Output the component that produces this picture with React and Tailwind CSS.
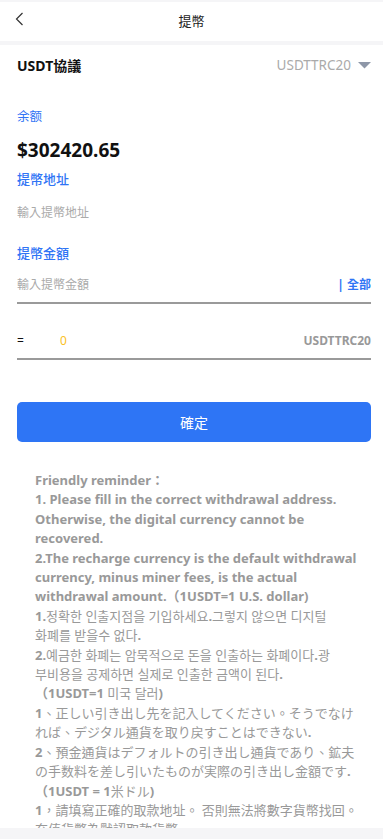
import React from 'react';

const font = { fontFamily: '"Noto Sans", "Noto Sans CJK TC", "Noto Sans CJK JP", "Noto Sans CJK KR", sans-serif' };

const reminder = [
  'Friendly reminder：',
  '1. Please fill in the correct withdrawal address.',
  'Otherwise, the digital currency cannot be',
  'recovered.',
  '2.The recharge currency is the default withdrawal',
  'currency, minus miner fees, is the actual',
  'withdrawal amount.（1USDT=1 U.S. dollar)',
  '1.정확한 인출지점을 기입하세요.그렇지 않으면 디지털',
  '화폐를 받을수 없다.',
  '2.예금한 화폐는 암묵적으로 돈을 인출하는 화폐이다.광',
  '부비용을 공제하면 실제로 인출한 금액이 된다.',
  '（1USDT=1 미국 달러)',
  '1、正しい引き出し先を記入してください。そうでなけ',
  'れば、デジタル通貨を取り戻すことはできない.',
  '2、預金通貨はデフォルトの引き出し通貨であり、鉱夫',
  'の手数料を差し引いたものが実際の引き出し金額です.',
  '（1USDT = 1米ドル)',
  '1，請填寫正確的取款地址。 否則無法將數字貨幣找回。',
  '充值貨幣為默認取款貨幣',
];

// latin parts are bold, CJK parts render regular like the reference
function Line({ text }) {
  const parts = text.split(/([\x00-\x7F：（]+)/).filter(Boolean);
  return (
    <div className="whitespace-nowrap">
      {parts.map((p, i) => (
        <span key={i} className={/^[\x00-\x7F：（]+$/.test(p) ? 'font-bold' : 'font-normal'}>{p}</span>
      ))}
    </div>
  );
}

export default function App() {
  return (
    <div className="relative h-[839px] w-[383px] overflow-hidden bg-[#f5f5f7] pt-[2px]" style={font}>
      {/* header */}
      <div className="relative flex h-[39px] items-center justify-center bg-white">
        <svg className="absolute left-[15px] top-[10px]" width="9" height="14" viewBox="0 0 9 14" fill="none">
          <path d="M7.5 1 L1.5 7 L7.5 13" stroke="#333" strokeWidth="1.2" />
        </svg>
        <span className="text-[13px] text-[#222]">提幣</span>
      </div>

      <div className="mt-[4px] bg-white pb-[40px] pl-[17px] pr-[12px]">
        <div className="flex h-[40px] items-center justify-between">
          <span className="text-[14px] font-bold text-[#111]">USDT協議</span>
          <div className="flex items-center gap-[7px]">
            <span className="text-[13.5px] text-[#aaa]">USDTTRC20</span>
            <svg width="13" height="7" viewBox="0 0 13 7">
              <path d="M0 0 H13 L6.5 6.5 Z" fill="#8e97a8" />
            </svg>
          </div>
        </div>

        <div className="mt-[24px] text-[12.5px] leading-[16px] text-[#2f74f5]">余额</div>
        <div className="mt-[13px] text-[19px] font-bold leading-[24px] text-[#111]">$302420.65</div>
        <div className="mt-[8px] text-[13px] font-medium leading-[18px] text-[#2f74f5]">提幣地址</div>
        <div className="mt-[17px] text-[12px] leading-[16px] text-[#aaa]">輸入提幣地址</div>
        <div className="mt-[23px] text-[13px] font-medium leading-[18px] text-[#2f74f5]">提幣金額</div>

        <div className="mt-[15px] flex items-center justify-between border-b-2 border-[#9a9a9a] pb-[9px]">
          <span className="text-[12px] leading-[16px] text-[#aaa]">輸入提幣金額</span>
          <span className="text-[12px] font-bold leading-[16px] text-[#2f74f5]">| 全部</span>
        </div>

        <div className="mt-[29px] flex items-center border-b-2 border-[#9a9a9a] pb-[9px]">
          <span className="w-[43px] text-[12px] leading-[16px] text-[#111]">=</span>
          <span className="text-[12px] leading-[16px] text-[#fbbf24]">0</span>
          <span className="ml-auto text-[12px] font-bold leading-[16px] text-[#999]">USDTTRC20</span>
        </div>

        <button className="mt-[42px] flex h-[40px] w-full items-center justify-center rounded-[5px] bg-[#2e75f5] text-[14px] text-white">
          確定
        </button>

        <div className="mt-[29px] pl-[18px] text-[13px] leading-[19.4px] text-[#999]">
          {reminder.map((line, i) => (
            <Line key={i} text={line} />
          ))}
        </div>
      </div>

      <div className="absolute bottom-0 left-0 h-[11px] w-full bg-[#f5f5f7]" />
    </div>
  );
}
